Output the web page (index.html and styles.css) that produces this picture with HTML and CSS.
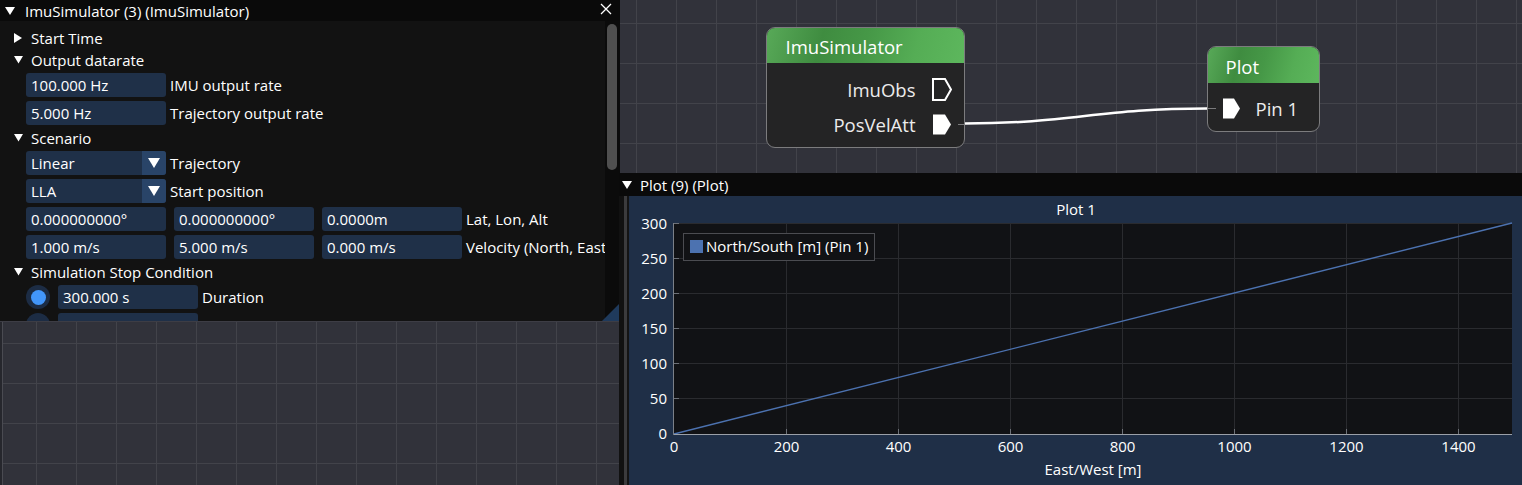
FILE: index.html
```html
<!DOCTYPE html>
<html>
<head>
<meta charset="utf-8">
<link rel="stylesheet" href="styles.css">
</head>
<body>
<div class="editor">
  <svg class="links" width="1522" height="485" viewBox="0 0 1522 485">
    <path d="M965 123.5 C 1070 123.5, 1100 108.5, 1207 108.5" fill="none" stroke="#ffffff" stroke-width="2.5"/>
  </svg>

  <div class="node node-imu">
    <div class="node-head">ImuSimulator</div>
    <div class="node-body">
      <div class="pin-row">
        <span class="pin-name">ImuObs</span>
        <svg class="pin" width="20" height="23" viewBox="0 0 20 23"><path d="M1 1 H13 L19 11.5 L13 22 H1 Z" fill="none" stroke="#fff" stroke-width="2"/></svg>
        <span class="stub-out"></span>
      </div>
      <div class="pin-row">
        <span class="pin-name">PosVelAtt</span>
        <svg class="pin" width="20" height="23" viewBox="0 0 20 23"><path d="M1 1.5 H13 L19 11.5 L13 21.5 H1 Z" fill="#fff"/></svg>
        <span class="stub-out"><i class="stub-line"></i></span>
      </div>
    </div>
  </div>

  <div class="node node-plot">
    <div class="node-head">Plot</div>
    <div class="node-body">
      <div class="pin-row in">
        <span class="stub-in"><i class="stub-line"></i></span>
        <svg class="pin" width="18" height="21" viewBox="0 0 18 21"><path d="M0 0.5 H11 L17 10.5 L11 20.5 H0 Z" fill="#fff"/></svg>
        <span class="pin-name">Pin 1</span>
      </div>
    </div>
  </div>

  <div class="win win-imu">
    <div class="titlebar">
      <svg class="tri-title" width="10" height="8" viewBox="0 0 10 8"><path d="M0 0 H10 L5 8 Z" fill="#fff"/></svg>
      <span class="title-text">ImuSimulator (3) (ImuSimulator)</span>
      <svg class="close" width="12" height="12" viewBox="0 0 12 12"><path d="M1 1 L11 11 M11 1 L1 11" stroke="#fff" stroke-width="1.3"/></svg>
    </div>
    <div class="win-body">
      <div class="win-main">
        <div class="tree"><span class="arr"><svg width="8" height="10" viewBox="0 0 8 10"><path d="M0 0 L8 5 L0 10 Z" fill="#fff"/></svg></span><span>Start Time</span></div>
        <div class="tree"><span class="arr"><svg width="9" height="8" viewBox="0 0 9 8"><path d="M0 0 H9 L4.5 7.5 Z" fill="#fff"/></svg></span><span>Output datarate</span></div>
        <div class="frow"><div class="inp">100.000 Hz</div><span class="lbl">IMU output rate</span></div>
        <div class="frow"><div class="inp">5.000 Hz</div><span class="lbl">Trajectory output rate</span></div>
        <div class="tree"><span class="arr"><svg width="9" height="8" viewBox="0 0 9 8"><path d="M0 0 H9 L4.5 7.5 Z" fill="#fff"/></svg></span><span>Scenario</span></div>
        <div class="frow"><div class="combo"><span class="combo-val">Linear</span><span class="combo-btn"><svg width="12" height="10" viewBox="0 0 12 10"><path d="M0 0 H12 L6 10 Z" fill="#fff"/></svg></span></div><span class="lbl">Trajectory</span></div>
        <div class="frow"><div class="combo"><span class="combo-val">LLA</span><span class="combo-btn"><svg width="12" height="10" viewBox="0 0 12 10"><path d="M0 0 H12 L6 10 Z" fill="#fff"/></svg></span></div><span class="lbl">Start position</span></div>
        <div class="frow"><div class="inp">0.000000000°</div><div class="inp">0.000000000°</div><div class="inp">0.0000m</div><span class="lbl">Lat, Lon, Alt</span></div>
        <div class="frow"><div class="inp">1.000 m/s</div><div class="inp">5.000 m/s</div><div class="inp">0.000 m/s</div><span class="lbl">Velocity (North, East, Down)</span></div>
        <div class="tree"><span class="arr"><svg width="9" height="8" viewBox="0 0 9 8"><path d="M0 0 H9 L4.5 7.5 Z" fill="#fff"/></svg></span><span>Simulation Stop Condition</span></div>
        <div class="frow"><span class="radio on"><i></i></span><div class="inp">300.000 s</div><span class="lbl">Duration</span></div>
        <div class="frow"><span class="radio"></span><div class="inp">100.000 m</div><span class="lbl">Distance to start</span></div>
      </div>
      <div class="scrollbar"><div class="thumb"></div></div>
    </div>
    <div class="grip"></div>
  </div>

  <div class="win win-plot">
    <div class="titlebar plot-title">
      <svg class="tri-title" width="10" height="8" viewBox="0 0 10 8"><path d="M0 0 H10 L5 8 Z" fill="#fff"/></svg>
      <span class="title-text">Plot (9) (Plot)</span>
    </div>
    <div class="plot-body">
      <div class="pstrip"></div>
      <div class="pbar"></div>
      <div class="pgap"></div>
      <div class="pframe">
        <svg class="plot" width="893" height="289" viewBox="0 0 893 289">
          <text x="447" y="19" text-anchor="middle">Plot 1</text>
          <rect x="45" y="27" width="838" height="211" fill="#111215"/>
          <g stroke="#2a2b2f" stroke-width="1">
            <line x1="45" y1="27.5" x2="883" y2="27.5"/>
            <line x1="45" y1="62.5" x2="883" y2="62.5"/>
            <line x1="45" y1="97.5" x2="883" y2="97.5"/>
            <line x1="45" y1="132.5" x2="883" y2="132.5"/>
            <line x1="45" y1="167.5" x2="883" y2="167.5"/>
            <line x1="45" y1="202.5" x2="883" y2="202.5"/>
            <line x1="157.5" y1="27" x2="157.5" y2="238"/>
            <line x1="269.5" y1="27" x2="269.5" y2="238"/>
            <line x1="381.5" y1="27" x2="381.5" y2="238"/>
            <line x1="493.5" y1="27" x2="493.5" y2="238"/>
            <line x1="605.5" y1="27" x2="605.5" y2="238"/>
            <line x1="717.5" y1="27" x2="717.5" y2="238"/>
            <line x1="829.5" y1="27" x2="829.5" y2="238"/>
          </g>
          <g stroke="#6d7178" stroke-width="1">
            <line x1="45" y1="27.5" x2="50" y2="27.5"/>
            <line x1="45" y1="62.5" x2="50" y2="62.5"/>
            <line x1="45" y1="97.5" x2="50" y2="97.5"/>
            <line x1="45" y1="132.5" x2="50" y2="132.5"/>
            <line x1="45" y1="167.5" x2="50" y2="167.5"/>
            <line x1="45" y1="202.5" x2="50" y2="202.5"/>
            <line x1="157.5" y1="233" x2="157.5" y2="238"/>
            <line x1="269.5" y1="233" x2="269.5" y2="238"/>
            <line x1="381.5" y1="233" x2="381.5" y2="238"/>
            <line x1="493.5" y1="233" x2="493.5" y2="238"/>
            <line x1="605.5" y1="233" x2="605.5" y2="238"/>
            <line x1="717.5" y1="233" x2="717.5" y2="238"/>
            <line x1="829.5" y1="233" x2="829.5" y2="238"/>
          </g>
          <line x1="45" y1="238" x2="883" y2="27" stroke="#4c72b0" stroke-width="1.4"/>
          <line x1="44.5" y1="27" x2="44.5" y2="238.5" stroke="#7b8088" stroke-width="1"/>
          <line x1="44.5" y1="238.5" x2="883" y2="238.5" stroke="#9ba0a8" stroke-width="1"/>
          <g class="ytl" text-anchor="end">
            <text x="38" y="33">300</text>
            <text x="38" y="68">250</text>
            <text x="38" y="103">200</text>
            <text x="38" y="138">150</text>
            <text x="38" y="173">100</text>
            <text x="38" y="208">50</text>
            <text x="38" y="243">0</text>
          </g>
          <g class="xtl" text-anchor="middle">
            <text x="45" y="256">0</text>
            <text x="157.5" y="256">200</text>
            <text x="269.5" y="256">400</text>
            <text x="381.5" y="256">600</text>
            <text x="493.5" y="256">800</text>
            <text x="605.5" y="256">1000</text>
            <text x="717.5" y="256">1200</text>
            <text x="829.5" y="256">1400</text>
          </g>
          <text x="464" y="279" text-anchor="middle">East/West [m]</text>
          <rect x="54.5" y="37.5" width="191" height="27" fill="#111215" stroke="#4b4c51" stroke-width="1"/>
          <rect x="61" y="44" width="13" height="13" fill="#4c72b0"/>
          <text x="77" y="56">North/South [m] (Pin 1)</text>
        </svg>
      </div>
    </div>
  </div>
</div>
</body>
</html>
```

FILE: styles.css
```css
* { box-sizing: border-box; }

html, body {
  margin: 0;
  padding: 0;
}

body {
  background: #31323a;
  font-family: "Open Sans", "DejaVu Sans", sans-serif;
  font-size: 15px;
  color: #ffffff;
  overflow: hidden;
}

.editor {
  position: relative;
  width: 1522px;
  height: 485px;
  overflow: hidden;
  background-color: #31323a;
  background-image:
    linear-gradient(to right, #26272d 0, #26272d 2px, #4a4b52 2px, #4a4b52 3px, transparent 3px),
    linear-gradient(to right, #42434a 1px, transparent 1px),
    linear-gradient(to bottom, #42434a 1px, transparent 1px);
  background-size: 100% 100%, 40px 40px, 40px 40px;
  background-position: 0 0, 36px 23px, 36px 23px;
  background-repeat: no-repeat, repeat, repeat;
}

.links {
  position: absolute;
  left: 0;
  top: 0;
  pointer-events: none;
}

/* ---------- nodes ---------- */
.node {
  position: absolute;
  border: 1.5px solid #7c7c7e;
  border-radius: 9px;
  background: #242425;
  overflow: hidden;
  font-size: 18.5px;
  color: #ececec;
  display: flex;
  flex-direction: column;
}

.node-head {
  display: flex;
  align-items: center;
  color: #ffffff;
  background: linear-gradient(105deg, #58a958 0%, #3f8c40 28%, #469847 50%, #55ad55 75%, #5db75d 100%);
  white-space: nowrap;
}

.node-imu {
  left: 766px;
  top: 27px;
  width: 199px;
  height: 121px;
}

.node-imu .node-head {
  height: 34.5px;
  padding-left: 18.5px;
  padding-top: 2px;
}

.node-imu .node-body {
  padding-top: 16px;
  display: flex;
  flex-direction: column;
  gap: 13px;
}

.node-plot {
  left: 1207px;
  top: 46px;
  width: 113px;
  height: 86px;
}

.node-plot .node-head {
  height: 35.5px;
  padding-left: 17.5px;
  padding-top: 4px;
}

.node-plot .node-body {
  padding-top: 15px;
}

.pin-row {
  height: 22px;
  display: flex;
  align-items: center;
  justify-content: flex-end;
}

.pin-row.in {
  justify-content: flex-start;
}

.pin-name {
  line-height: 22px;
  white-space: nowrap;
}

.pin-row .pin-name + .pin {
  margin-left: 16px;
}

.pin-row.in .pin + .pin-name {
  margin-left: 15px;
}

.pin {
  display: block;
  flex: none;
}

.stub-out {
  width: 12.5px;
  height: 22px;
  display: flex;
  align-items: center;
  padding-left: 6px;
}

.stub-in {
  width: 14.5px;
  height: 22px;
  display: flex;
  align-items: center;
}

.stub-line {
  display: block;
  width: 100%;
  height: 1.5px;
  background: #7a7a7c;
}

.stub-in .stub-line {
  width: 8px;
}

/* ---------- windows ---------- */
.win {
  position: absolute;
  background: #121212;
  overflow: hidden;
}

.titlebar {
  display: flex;
  align-items: center;
  background: #0a0a0a;
  white-space: nowrap;
}

.title-text {
  line-height: 20px;
}

.win-imu {
  left: 0;
  top: 0;
  width: 620px;
  height: 322px;
  border-bottom: 1px solid #3d3d45;
}

.win-imu .titlebar {
  height: 21px;
  padding-left: 5px;
  gap: 10px;
}

.close {
  margin-left: auto;
  margin-right: 8px;
  margin-top: -3px;
}

.win-body {
  display: flex;
  height: 300px;
}

.win-main {
  flex: 1;
  min-width: 0;
  overflow: hidden;
  padding: 8px 0 0 14px;
  display: flex;
  flex-direction: column;
  gap: 4px;
}

.tree {
  height: 18px;
  display: flex;
  align-items: center;
  white-space: nowrap;
  line-height: 18px;
}

.arr {
  width: 17px;
  flex: none;
  display: flex;
  align-items: center;
}

.arr svg {
  display: block;
}

.frow {
  height: 24px;
  flex: none;
  margin-left: 12px;
  display: flex;
  align-items: center;
  gap: 8px;
  white-space: nowrap;
}

.inp {
  width: 140px;
  height: 24px;
  flex: none;
  background: #1f3048;
  border-radius: 3px;
  padding-left: 5px;
  line-height: 24px;
  overflow: hidden;
}

.lbl {
  margin-left: -4px;
  line-height: 24px;
}

.combo {
  width: 140px;
  height: 24px;
  flex: none;
  display: flex;
  border-radius: 3px;
  overflow: hidden;
  background: #1f3048;
}

.combo-val {
  flex: 1;
  padding-left: 5px;
  line-height: 24px;
}

.combo-btn {
  width: 24px;
  display: flex;
  align-items: center;
  justify-content: center;
  background: #294468;
}

.radio {
  width: 24px;
  height: 24px;
  flex: none;
  border-radius: 50%;
  background: #1c2c44;
  display: flex;
  align-items: center;
  justify-content: center;
}

.radio i {
  display: block;
  width: 15px;
  height: 15px;
  border-radius: 50%;
  background: #4296fa;
}

.scrollbar {
  width: 15px;
  flex: none;
  background: #0b0b0b;
  padding: 3px 3px 0 2px;
}

.thumb {
  height: 146px;
  border-radius: 5px;
  background: #4f4f4f;
}

.grip {
  position: absolute;
  right: 0;
  bottom: 0;
  width: 18px;
  height: 18px;
  background: #1f3a5c;
  clip-path: polygon(100% 0, 100% 100%, 0 100%);
}

/* ---------- plot window ---------- */
.win-plot {
  left: 619px;
  top: 173px;
  width: 903px;
  height: 312px;
  background: #0f0f0f;
}

.plot-title {
  height: 23px;
  padding-left: 3px;
  gap: 8px;
}

.plot-body {
  display: flex;
  height: 289px;
}

.pstrip {
  width: 5px;
  background: #111111;
}

.pbar {
  width: 3px;
  background: #3b3b3d;
}

.pgap {
  width: 2px;
  background: #141414;
}

.pframe {
  flex: 1;
  background: #1f2f47;
}

.plot {
  display: block;
  font-family: "Open Sans", "DejaVu Sans", sans-serif;
  font-size: 15px;
  fill: #ffffff;
}
```
